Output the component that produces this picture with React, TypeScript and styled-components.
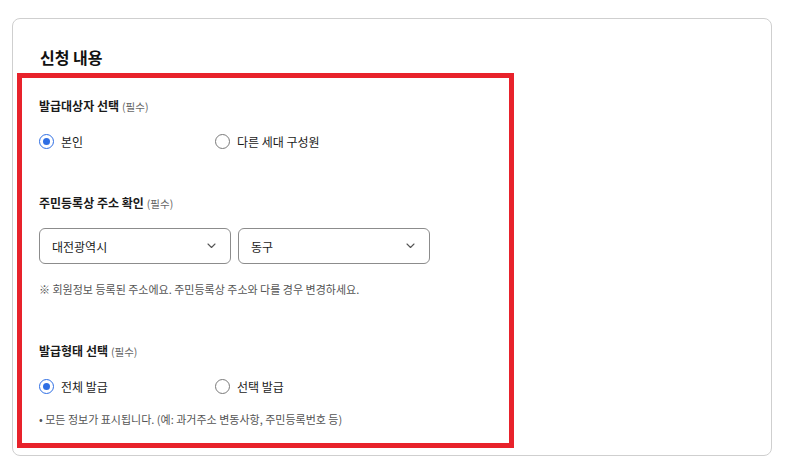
import React from "react";
import styled, { createGlobalStyle } from "styled-components";

const Global = createGlobalStyle`
  html, body { margin: 0; padding: 0; background: #ffffff; }
  body { font-family: "Noto Sans CJK KR", "Noto Sans", sans-serif; color: #1a1a1a; }
  * { box-sizing: border-box; }
`;

const Page = styled.div`
  padding: 18px 14px 18px 12px;
`;

const Card = styled.div`
  width: 760px;
  height: 438px;
  border: 1px solid #cfcfcf;
  border-radius: 8px;
  padding: 26px 4px 0 4px;
`;

const Title = styled.h2`
  margin: 0 0 4px 23px;
  font-size: 16px;
  line-height: 24px;
  font-weight: 700;
  color: #111;
`;

const Highlight = styled.div`
  width: 497px;
  height: 375px;
  border: 5px solid #e8222b;
  padding: 19px 17px 0 17px;
`;

const Section = styled.section<{ $gap: number }>`
  margin-bottom: ${(p) => p.$gap}px;
`;

const Label = styled.div`
  font-size: 12px;
  line-height: 18px;
  font-weight: 700;
  color: #1a1a1a;
  margin-bottom: 15px;
`;

const Required = styled.span`
  font-size: 10.5px;
  font-weight: 400;
  color: #666;
  margin-left: 3px;
`;

const RadioRow = styled.div`
  display: grid;
  grid-template-columns: 176px auto;
  height: 20px;
  align-items: center;
`;

const RadioItem = styled.label`
  display: flex;
  align-items: center;
  gap: 7px;
  font-size: 12px;
  color: #1a1a1a;
`;

const Circle = styled.span<{ $on: boolean }>`
  width: 15px;
  height: 15px;
  border-radius: 50%;
  border: 1.5px solid ${(p) => (p.$on ? "#2f6fe4" : "#7a7a7a")};
  display: flex;
  align-items: center;
  justify-content: center;
  &::after {
    content: "";
    width: 7px;
    height: 7px;
    border-radius: 50%;
    background: ${(p) => (p.$on ? "#2f6fe4" : "transparent")};
  }
`;

const SelectRow = styled.div`
  display: flex;
  gap: 7px;
  margin-bottom: 17px;
`;

const Select = styled.div`
  width: 192px;
  height: 36px;
  border: 1px solid #8c8c8c;
  border-radius: 6px;
  display: flex;
  align-items: center;
  justify-content: space-between;
  padding: 0 14px 0 12px;
  font-size: 12px;
  color: #1a1a1a;
`;

const Note = styled.p<{ $top?: number }>`
  margin: ${(p) => p.$top ?? 0}px 0 0 0;
  font-size: 11px;
  line-height: 16px;
  color: #555;
`;

const Radio = ({ on, children }: { on: boolean; children: React.ReactNode }) => (
  <RadioItem>
    <Circle $on={on} />
    {children}
  </RadioItem>
);

const Chevron = () => (
  <svg width="9" height="6" viewBox="0 0 9 6" fill="none">
    <path d="M1 1l3.5 3.5L8 1" stroke="#555" strokeWidth="1.1" strokeLinecap="round" strokeLinejoin="round" />
  </svg>
);

export default function App() {
  return (
    <>
      <Global />
      <Page>
        <Card>
          <Title>신청 내용</Title>
          <Highlight>
            <Section $gap={43}>
              <Label>
                발급대상자 선택<Required>(필수)</Required>
              </Label>
              <RadioRow>
                <Radio on>본인</Radio>
                <Radio on={false}>다른 세대 구성원</Radio>
              </RadioRow>
            </Section>
            <Section $gap={45}>
              <Label>
                주민등록상 주소 확인<Required>(필수)</Required>
              </Label>
              <SelectRow>
                <Select>
                  대전광역시
                  <Chevron />
                </Select>
                <Select>
                  동구
                  <Chevron />
                </Select>
              </SelectRow>
              <Note>※ 회원정보 등록된 주소에요. 주민등록상 주소와 다를 경우 변경하세요.</Note>
            </Section>
            <Section $gap={0}>
              <Label>
                발급형태 선택<Required>(필수)</Required>
              </Label>
              <RadioRow>
                <Radio on>전체 발급</Radio>
                <Radio on={false}>선택 발급</Radio>
              </RadioRow>
              <Note $top={15}>• 모든 정보가 표시됩니다. (예: 과거주소 변동사항, 주민등록번호 등)</Note>
            </Section>
          </Highlight>
        </Card>
      </Page>
    </>
  );
}
